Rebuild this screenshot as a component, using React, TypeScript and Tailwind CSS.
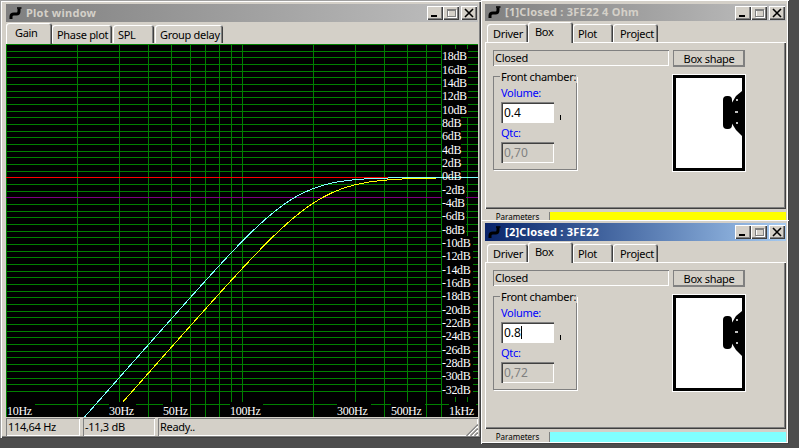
import React from "react";

const FACE = "bg-[#d4d0c8]";
const RAISED = "shadow-[inset_1px_1px_0_#ffffff,inset_-1px_-1px_0_#404040,inset_-2px_-2px_0_#808080]";
const SUNKEN = "shadow-[inset_1px_1px_0_#808080,inset_2px_2px_0_#404040,inset_-1px_-1px_0_#ffffff]";
const THIN = "shadow-[inset_1px_1px_0_#808080,inset_-1px_-1px_0_#ffffff]";
const FONT = "font-['Liberation_Sans',Arial,sans-serif]";

function AppIcon() {
  return (
    <svg width="13" height="13" viewBox="0 0 13 13" className="shrink-0">
      <path d="M2 12 V9.5 Q2 7 5 7 H7.5 Q10 7 10 4 V1.5" fill="none" stroke="#000" strokeWidth="3" />
      <path d="M8 1 H12.5" stroke="#000" strokeWidth="1.5" />
    </svg>
  );
}

function CaptionButton({ kind }: { kind: "min" | "max" | "close" }) {
  return (
    <div className={`${FACE} ${RAISED} w-4 h-[14px] flex items-center justify-center`}>
      <svg width="16" height="14" viewBox="0 0 16 14" shapeRendering="crispEdges">
        {kind === "min" && <rect x="4" y="9" width="6" height="2" fill="#000" />}
        {kind === "max" && (
          <g fill="none">
            <rect x="4.5" y="3.5" width="8" height="7" stroke="#ffffff" transform="translate(1 1)" />
            <rect x="4.5" y="3.5" width="8" height="7" stroke="#808080" />
            <rect x="4" y="3" width="9" height="2" fill="#808080" />
          </g>
        )}
        {kind === "close" && (
          <path d="M4 3 L12 11 M12 3 L4 11" stroke="#000" strokeWidth="1.6" shapeRendering="auto" />
        )}
      </svg>
    </div>
  );
}

function TitleBar({ title, active, height }: { title: string; active?: boolean; height: string }) {
  return (
    <div
      className={`${height} flex items-center pl-[3px] pr-[1px] bg-linear-to-r ${
        active ? "from-[#0a246a] to-[#a6caf0] text-white" : "from-[#808080] to-[#c0c0c0] text-[#d4d0c8]"
      }`}
    >
      <AppIcon />
      <span className="ml-[4px] text-[11px] font-bold tracking-[0.25px] whitespace-nowrap">{title}</span>
      <div className="ml-auto flex">
        <CaptionButton kind="min" />
        <CaptionButton kind="max" />
        <div className="w-[2px]" />
        <CaptionButton kind="close" />
      </div>
    </div>
  );
}

function Tab({ label, width, active }: { label: string; width: string; active?: boolean }) {
  return (
    <div
      className={`${width} ${FACE} rounded-t-[3px] flex text-black shadow-[inset_1px_1px_0_#ffffff,inset_-1px_0_0_#404040,inset_-2px_0_0_#808080] ${
        active ? "h-[21px] pt-[2px] relative z-10 -mb-px" : "h-[18px] pt-[2px]"
      }`}
    >
      <span className="whitespace-nowrap leading-[15px]">{label}</span>
    </div>
  );
}

const vx = [6, 77, 119, 148, 171, 190, 205, 219, 231, 242, 313, 355, 384, 407, 426, 441, 455, 467];
const hy: number[] = [];
for (let n = 0; n <= 54; n++) if (n !== 53) hy.push(Math.round(44 + 6.67 * n) + 0.5);

const dbLabels = [18, 16, 14, 12, 10, 8, 6, 4, 2, 0, -2, -4, -6, -8, -10, -12, -14, -16, -18, -20, -22, -24, -26, -28, -30, -32];
const hzLabels: [string, number, number][] = [
  ["10Hz", 7, 28],
  ["30Hz", 109, 27],
  ["50Hz", 163, 27],
  ["100Hz", 230, 33],
  ["300Hz", 337, 34],
  ["500Hz", 391, 34],
  ["1kHz", 449, 27],
];

function curve(fc: number, q: number, xEnd: number) {
  const pts: string[] = [];
  for (let x = 80; x <= xEnd; x += 1) {
    const f = 10 * Math.pow(10, (x - 6) / 236);
    const u = f / fc;
    const h2 = (u * u * u * u) / ((1 - u * u) * (1 - u * u) + (u * u) / (q * q));
    const db = 10 * Math.log10(h2);
    const y = 177.5 - db * 6.67;
    pts.push(`${x},${y.toFixed(1)}`);
  }
  return pts.join(" ");
}

function Chart() {
  return (
    <svg width="472" height="373" viewBox="6 44 472 373" className="block bg-black" fontFamily="'Liberation Serif', 'Times New Roman', serif">
      <g stroke="#008000" strokeWidth="1" shapeRendering="crispEdges">
        {hy.map((y) => (
          <line key={y} x1="6" x2="478" y1={y} y2={y} />
        ))}
        {vx.map((x) => (
          <line key={x} x1={x + 0.5} x2={x + 0.5} y1="44" y2="417" />
        ))}
      </g>
      <g shapeRendering="crispEdges" strokeWidth="1">
        <line x1="6" x2="478" y1="177.5" y2="177.5" stroke="#ff0000" />
        <line x1="6" x2="478" y1="197.5" y2="197.5" stroke="#800080" />
      </g>
      <polyline points={curve(217, 0.7, 442)} fill="none" stroke="#ffff00" strokeWidth="1" shapeRendering="crispEdges" />
      <polyline points={curve(170, 0.72, 442)} fill="none" stroke="#80ffff" strokeWidth="1" shapeRendering="crispEdges" />
      {dbLabels.map((d) => {
        const cy = 175.7 - d * 6.667;
        const digits = Math.abs(d) >= 10;
        const w = d < 0 ? (digits ? 31 : 24) : digits ? 26 : 19;
        return <rect key={d} x="442" y={Math.round(cy - 6.5)} width={w} height="14" fill="#000" shapeRendering="crispEdges" />;
      })}
      <line x1="442" x2="478" y1="177.5" y2="177.5" stroke="#80ffff" shapeRendering="crispEdges" />
      {dbLabels.map((d) => (
        <text key={d} x="442" y={175.7 - d * 6.667 + 4.5} fill="#fff" fontSize="12">
          {d}dB
        </text>
      ))}
      {hzLabels.map(([t, x, w]) => (
        <rect key={t} x={x} y="402" width={w} height="15" fill="#000" shapeRendering="crispEdges" />
      ))}
      {hzLabels.map(([t, x]) => (
        <text key={t} x={x} y="415" fill="#fff" fontSize="12">
          {t}
        </text>
      ))}
    </svg>
  );
}

function Grip() {
  return (
    <svg width="12" height="12" viewBox="0 0 12 12" className="absolute right-0 bottom-0" shapeRendering="crispEdges">
      {[0, 4, 8].map((o) => (
        <g key={o}>
          <path d={`M${o + 0.5} 12 L12 ${o + 0.5}`} stroke="#808080" strokeWidth="1.2" shapeRendering="auto" />
          <path d={`M${o + 2} 12 L12 ${o + 2}`} stroke="#ffffff" strokeWidth="1" shapeRendering="auto" />
        </g>
      ))}
    </svg>
  );
}

function PlotWindow() {
  return (
    <div className={`${FACE} w-[481px] h-[438px] shrink-0 pt-[4px] pl-[6px] pr-[3px] shadow-[inset_1px_1px_0_#a0a0a0,inset_2px_2px_0_#ffffff,inset_-1px_-1px_0_#404040,inset_-2px_-2px_0_#808080]`}>
      <TitleBar title="Plot window" height="h-[18px]" />
      <div className="h-[22px] pb-px flex items-end">
        <Tab label="Gain" width="w-[46px] pl-[9px]" active />
        <Tab label="Phase plot" width="w-[60px] pl-[5px]" />
        <Tab label="SPL" width="w-[41px] ml-px pl-[5px]" />
        <Tab label="Group delay" width="w-[68px] ml-px pl-[5px]" />
      </div>
      <Chart />
      <div className="flex gap-[3px] h-[18px] mt-px text-black">
        <div className={`w-[74px] pl-[2px] leading-[18px] ${THIN}`}>114,64 Hz</div>
        <div className={`w-[72px] pl-[2px] leading-[18px] ${THIN}`}>-11,3 dB</div>
        <div className={`flex-1 pl-[2px] leading-[18px] relative ${THIN}`}>
          Ready..
          <Grip />
        </div>
      </div>
    </div>
  );
}

function SpeakerBox() {
  return (
    <div className="w-[72px] h-[96px] border-[3px] border-black bg-white outline-1 outline-[#ffffff]">
      <svg width="66" height="90" viewBox="0 0 66 90" className="block">
        <rect x="47" y="18" width="9" height="33" rx="4" fill="#000" />
        <path d="M54 28 L60 18 L66 13 V58 L60 52 L55 44 Z" fill="#000" />
        <rect x="60" y="21" width="2" height="2" fill="#c0c0c0" />
        <rect x="59" y="33" width="3" height="2" fill="#c0c0c0" />
        <rect x="60" y="44" width="2" height="2" fill="#c0c0c0" />
      </svg>
    </div>
  );
}

function ValueBox({ value, disabled, caret }: { value: string; disabled?: boolean; caret?: boolean }) {
  return (
    <div className={`w-[53px] h-[21px] flex items-center pl-[3px] text-[12px] tracking-normal ${SUNKEN} ${disabled ? "text-[#808080]" : "bg-white text-black"}`}>
      {value}
      {caret && <span className="w-px h-[13px] bg-black" />}
    </div>
  );
}

function SpeakerWindow(p: {
  title: string;
  active?: boolean;
  frame: string;
  titleH: string;
  volume: string;
  qtc: string;
  color: string;
  caret?: boolean;
}) {
  return (
    <div className={`${FACE} ${p.frame} pl-[4px] pr-[3px]`}>
      <TitleBar title={p.title} active={p.active} height={p.titleH} />
      <div className="h-[21px] pl-[2px] flex items-end">
        <Tab label="Driver" width="w-[41px] pl-[6px]" />
        <Tab label="Box" width="w-[45px] pl-[7px]" active />
        <Tab label="Plot" width="w-[40px] pl-[5px]" />
        <Tab label="Project" width="w-[45px] pl-[7px]" />
      </div>
      <div className="h-[167px] pl-[8px] pt-[8px] shadow-[inset_1px_1px_0_#ffffff,inset_-1px_-1px_0_#404040,inset_-2px_-2px_0_#808080] text-black">
        <div className="flex items-start w-[252px] justify-between">
          <div className={`w-[176px] h-[16px] pl-[2px] leading-[16px] ${THIN}`}>Closed</div>
          <div className={`w-[72px] h-[17px] text-center leading-[17px] ${RAISED} outline-1 outline-[#808080] -outline-offset-1`}>Box shape</div>
        </div>
        <div className="flex items-start w-[252px] justify-between mt-[8px]">
          <div className="relative w-[84px] h-[94px] mt-[1px] border border-[#808080] shadow-[1px_1px_0_#ffffff] pl-[7px]">
            <span className={`absolute left-[7px] -top-[7px] ${FACE} px-px leading-[13px] whitespace-nowrap -ml-px`}>Front chamber:</span>
            <div className="pt-[8px] h-[25px] leading-[15px] text-[#0000ff]">Volume:</div>
            <div className="flex items-end">
              <ValueBox value={p.volume} caret={p.caret} />
              <span className="ml-[6px] mb-[3px] w-px h-[5px] bg-black" />
            </div>
            <div className="h-[19px] pt-[2px] leading-[15px] text-[#0000ff]">Qtc:</div>
            <ValueBox value={p.qtc} disabled />
          </div>
          <SpeakerBox />
        </div>
      </div>
      <div className="flex h-[10px] mt-[3px]">
        <div className="w-[65px] text-center text-[8px] pt-[2px] leading-[6px] tracking-normal text-black shadow-[inset_-1px_0_0_#808080]">Parameters</div>
        <div className={`flex-1 ${p.color}`} />
      </div>
    </div>
  );
}

export default function App() {
  return (
    <div className={`w-[799px] h-[448px] bg-[#4d4d4d] flex items-start overflow-hidden text-[11px] tracking-[-0.3px] ${FONT}`}>
      <PlotWindow />
      <div className="w-[308px] shrink-0">
        <SpeakerWindow
          title="[1]Closed : 3FE22 4 Ohm"
          frame="h-[220px] pt-[4px] shadow-[inset_1px_1px_0_#ffffff,inset_-1px_0_0_#404040,inset_-2px_0_0_#ffffff]"
          titleH="h-[17px]"
          volume="0.4"
          qtc="0,70"
          color="bg-[#ffff00]"
        />
        <SpeakerWindow
          title="[2]Closed : 3FE22"
          active
          frame="h-[224px] pt-[3px] relative shadow-[inset_1px_1px_0_#ffffff,inset_-1px_-1px_0_#404040,inset_-2px_-2px_0_#ffffff]"
          titleH="h-[18px]"
          volume="0.8"
          qtc="0,72"
          color="bg-[#80ffff]"
          caret
        />
      </div>
    </div>
  );
}
